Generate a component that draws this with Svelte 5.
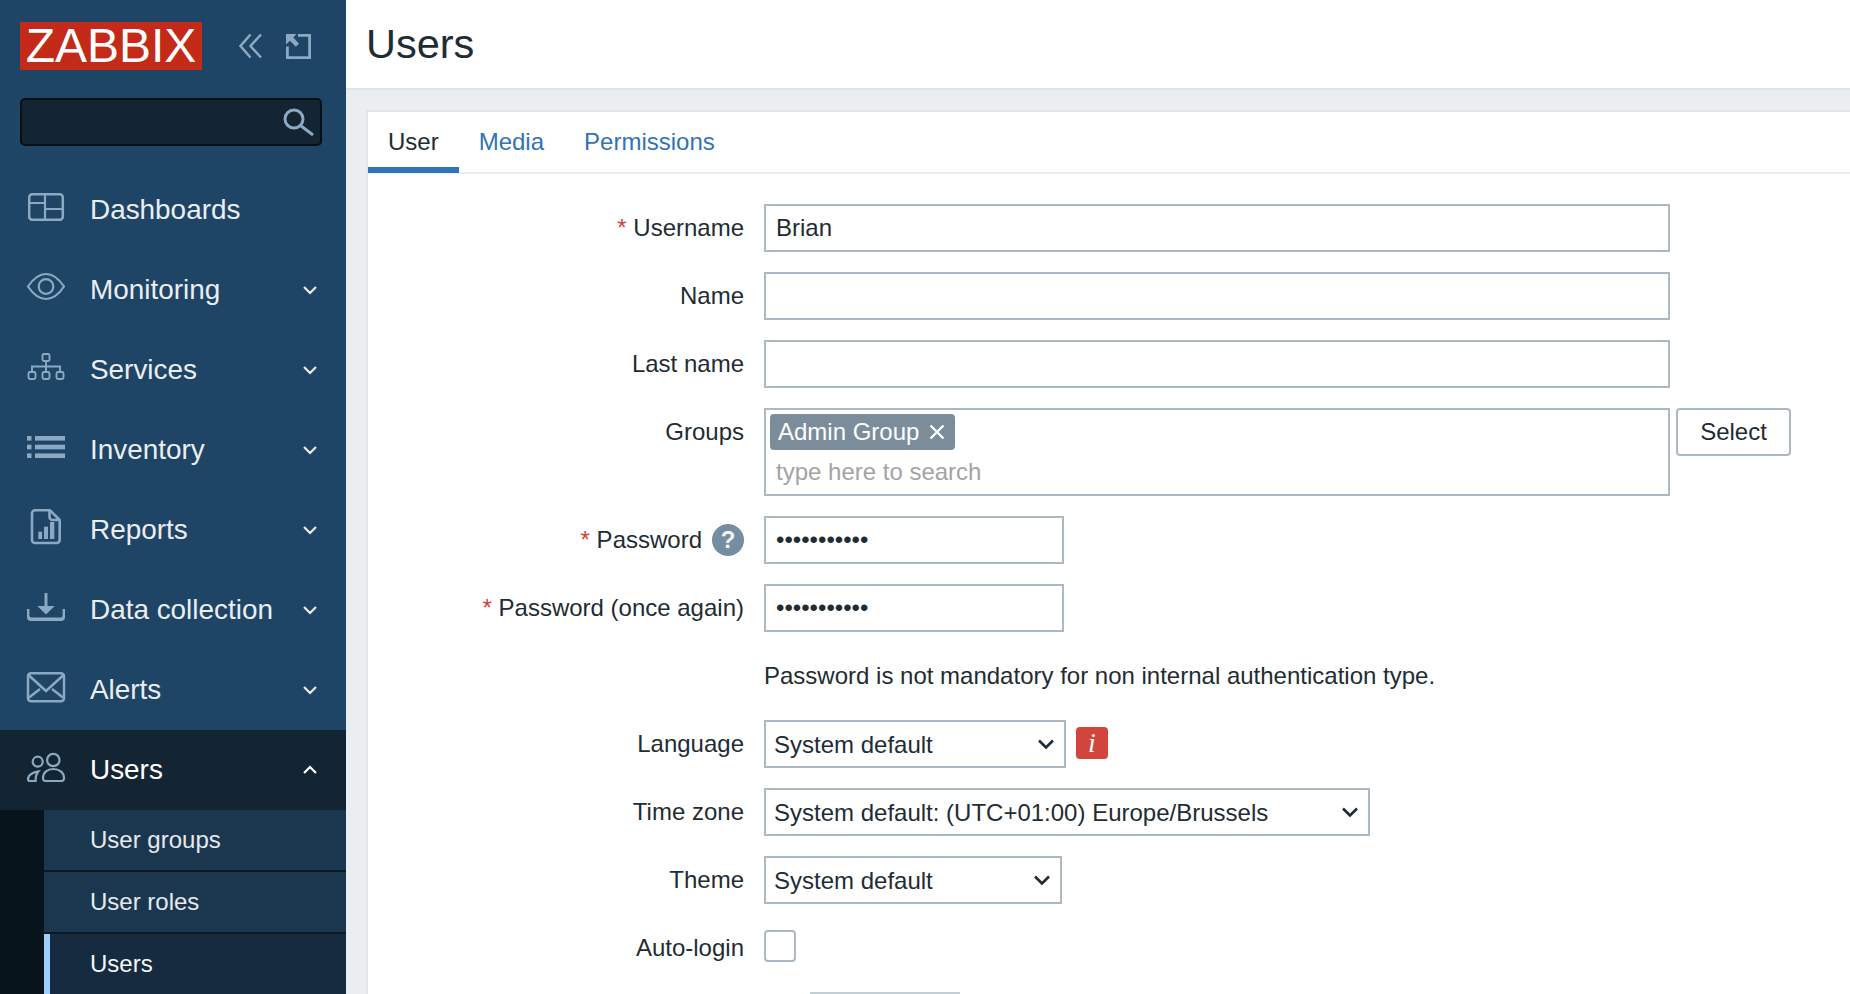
<script>
  const nav = [
    { id: 'dash', label: 'Dashboards', chev: false },
    { id: 'eye', label: 'Monitoring', chev: true },
    { id: 'svc', label: 'Services', chev: true },
    { id: 'inv', label: 'Inventory', chev: true },
    { id: 'rep', label: 'Reports', chev: true },
    { id: 'data', label: 'Data collection', chev: true },
    { id: 'mail', label: 'Alerts', chev: true },
    { id: 'users', label: 'Users', chev: true, open: true }
  ];
  const sub = [
    { label: 'User groups' },
    { label: 'User roles' },
    { label: 'Users', active: true }
  ];
</script>

{#snippet icon(id)}
  <svg class="nav-icon" width="40" height="40" viewBox="0 0 40 40" fill="none" stroke="currentColor" stroke-width="2.2">
    {#if id === 'dash'}
      <rect x="3.2" y="7.2" width="33.6" height="25.6" rx="3" stroke-width="2.5" />
      <path d="M19 7v26M3 16h16M19 22h18" />
    {:else if id === 'eye'}
      <path d="M2 19.5C8 10.5 14 7 20 7s12 3.500 18 12.500C32 28.500 26 32 20 32S8 28.500 2 19.500Z" />
      <circle cx="20" cy="19.500" r="7.300" />
    {:else if id === 'svc'}
      <g stroke-width="1.900">
        <rect x="16.500" y="7" width="7" height="7" rx="1.500" />
        <rect x="2.500" y="25" width="7" height="7" rx="1.500" />
        <rect x="16.500" y="25" width="7" height="7" rx="1.500" />
        <rect x="30.500" y="25" width="7" height="7" rx="1.500" />
        <path d="M20 14v11M6 24.500V19.500h28v5" />
      </g>
    {:else if id === 'inv'}
      <g fill="currentColor" stroke="none">
        <rect x="1" y="9" width="4.500" height="4.600" />
        <rect x="1" y="17.700" width="4.500" height="4.600" />
        <rect x="1" y="26.400" width="4.500" height="4.600" />
        <rect x="9" y="9" width="30" height="4.600" />
        <rect x="9" y="17.700" width="30" height="4.600" />
        <rect x="9" y="26.400" width="30" height="4.600" />
      </g>
    {:else if id === 'rep'}
      <path stroke-width="2.600" stroke-linejoin="round" d="M9 3.300H24L33.700 13V33a3 3 0 0 1-3 3H9a3 3 0 0 1-3-3V6.300a3 3 0 0 1 3-3Z" />
      <path stroke-width="2.600" d="M23.500 3.300V10a3 3 0 0 0 3 3h7" />
      <g fill="currentColor" stroke="none">
        <rect x="12.300" y="24.700" width="3.800" height="7.300" />
        <rect x="18" y="19.700" width="4" height="12.300" />
        <rect x="24" y="15" width="4.300" height="17" />
      </g>
    {:else if id === 'data'}
      <path stroke-width="3" d="M20 6v15" />
      <path fill="currentColor" stroke="none" d="M11.300 19H28.700L20 27.500Z" />
      <path fill="currentColor" stroke="none" d="M1 22h2.400v6.500a2 2 0 0 0 2 2h29.200a2 2 0 0 0 2-2V22H39v8a4 4 0 0 1-4 4H5a4 4 0 0 1-4-4Z" />
    {:else if id === 'mail'}
      <rect x="2" y="6.300" width="36" height="28" rx="3" stroke-width="2.500" />
      <path stroke-width="2.500" d="M3 8.500 20 24 37 8.500M3 30.500l11-8.500M37 30.500l-11-8.500" />
    {:else if id === 'users'}
      <circle cx="27.300" cy="13" r="6.200" />
      <circle cx="11.700" cy="14.700" r="5" />
      <path d="M17 31C17 25.500 21.500 22 27.300 22S38 25.500 38 31c0 2-1 3-2.500 3h-16C18 34 17 33 17 31Z" />
      <path d="M12.500 24.300C6.500 25 2 28.300 2 32c0 1.300.7 2 2 2h5.700C9.300 30.500 10.300 27 12.500 24.300Z" />
    {/if}
  </svg>
{/snippet}

<div class="page">
  <aside class="sidebar">
    <div class="brand">
      <div class="logo">ZABBIX</div>
      <button class="tool first" aria-label="Collapse sidebar">
        <svg width="24" height="26" viewBox="0 0 24 26" fill="none" stroke="currentColor" stroke-width="2.500">
          <path d="M11.500 1.500 1.500 13l10 11.500M22 1.500 11.500 13 22 24.500" />
        </svg>
      </button>
      <button class="tool" aria-label="Hide sidebar">
        <svg width="26" height="26" viewBox="0 0 26 26" fill="none" stroke="currentColor" stroke-width="2.800">
          <path d="M13 2.400H24.600V24.600H2.400V13.500" />
          <path fill="currentColor" stroke="none" d="M1 1H11.500L8.300 4.600 14 10.800 10.800 13.800 5 7.800 1 11.500Z" />
        </svg>
      </button>
    </div>

    <div class="search">
      <input class="search-input" type="text" aria-label="Search" />
      <svg class="search-icon" width="32" height="28" viewBox="0 0 32 28" fill="none" stroke="currentColor" stroke-width="3">
        <circle cx="11" cy="11" r="9" />
        <path d="M17.500 17.500 30 27" />
      </svg>
    </div>

    <nav class="nav">
      {#each nav as item}
        <div class="nav-item" class:open={item.open}>
          {@render icon(item.id)}
          <span class="nav-label">{item.label}</span>
          {#if item.chev}
            <svg class="chev" width="14" height="10" viewBox="0 0 14 10" fill="none" stroke="currentColor" stroke-width="2.200">
              {#if item.open}
                <path d="M1 8l6-6 6 6" />
              {:else}
                <path d="M1 2l6 6 6-6" />
              {/if}
            </svg>
          {/if}
        </div>
      {/each}
      <div class="submenu">
        {#each sub as s}
          <div class="sub-item" class:active={s.active}>{s.label}</div>
        {/each}
      </div>
    </nav>
  </aside>

  <main class="main">
    <header class="head"><h1>Users</h1></header>
    <section class="card">
      <div class="tabs">
        <div class="tab current">User</div>
        <div class="tab">Media</div>
        <div class="tab">Permissions</div>
      </div>

      <form class="form">
        <div class="lbl"><span class="req">*</span> Username</div>
        <div class="field"><input class="text" type="text" value="Brian" /></div>

        <div class="lbl">Name</div>
        <div class="field"><input class="text" type="text" /></div>

        <div class="lbl">Last name</div>
        <div class="field"><input class="text" type="text" /></div>

        <div class="lbl">Groups</div>
        <div class="field groups">
          <div class="multi">
            <div class="tag">Admin Group
              <svg width="16" height="16" viewBox="0 0 16 16" stroke="currentColor" stroke-width="2.400" fill="none">
                <path d="M1.500 1.500l13 13M14.500 1.500l-13 13" />
              </svg>
            </div>
            <div class="placeholder">type here to search</div>
          </div>
          <button type="button" class="select-btn">Select</button>
        </div>

        <div class="lbl with-hint"><span class="req">*</span>&nbsp;Password <span class="hint">?</span></div>
        <div class="field"><input class="text short" type="password" value="abcdefghijk" /></div>

        <div class="lbl"><span class="req">*</span> Password (once again)</div>
        <div class="field"><input class="text short" type="password" value="abcdefghijk" /></div>

        <div class="lbl"></div>
        <div class="note">Password is not mandatory for non internal authentication type.</div>

        <div class="lbl">Language</div>
        <div class="field">
          <div class="sel w-lang">
            <select><option>System default</option></select>
            <svg class="sel-arrow" width="16" height="10" viewBox="0 0 16 10" fill="none" stroke="currentColor" stroke-width="2.600"><path d="M1 1.500l7 7 7-7" /></svg>
          </div>
          <span class="info">i</span>
        </div>

        <div class="lbl">Time zone</div>
        <div class="field">
          <div class="sel w-tz">
            <select><option>System default: (UTC+01:00) Europe/Brussels</option></select>
            <svg class="sel-arrow" width="16" height="10" viewBox="0 0 16 10" fill="none" stroke="currentColor" stroke-width="2.600"><path d="M1 1.500l7 7 7-7" /></svg>
          </div>
        </div>

        <div class="lbl">Theme</div>
        <div class="field">
          <div class="sel w-theme">
            <select><option>System default</option></select>
            <svg class="sel-arrow" width="16" height="10" viewBox="0 0 16 10" fill="none" stroke="currentColor" stroke-width="2.600"><path d="M1 1.500l7 7 7-7" /></svg>
          </div>
        </div>

        <div class="lbl">Auto-login</div>
        <div class="field"><input class="check" type="checkbox" aria-label="Auto-login" /></div>

        <div class="lbl"></div>
        <div class="field"><div class="cut-field"></div></div>
      </form>
    </section>
  </main>
</div>

<style>
  :global(body) {
    margin: 0;
    overflow: hidden;
    background: #ebeef0;
  }
  .page {
    display: flex;
    width: 1850px;
    height: 994px;
    overflow: hidden;
    font-family: "Liberation Sans", Arial, sans-serif;
    color: #1f2c33;
    font-size: 24px;
  }
  .sidebar {
    flex: 0 0 346px;
    background: #1f4566;
    color: #ebeef1;
  }
  .brand {
    display: flex;
    align-items: center;
    height: 48px;
    padding: 22px 0 0 20px;
  }
  .logo {
    width: 182px;
    height: 48px;
    background: #c32a18;
    color: #fff;
    font-size: 48px;
    line-height: 48px;
    text-align: center;
    flex: none;
  }
  .tool {
    display: flex;
    padding: 0;
    border: 0;
    background: none;
    color: #8ba9c2;
    margin-left: 22px;
  }
  .tool.first {
    margin-left: 37px;
  }
  .search {
    position: relative;
    margin: 28px 24px 0 20px;
    height: 48px;
  }
  .search-input {
    display: block;
    box-sizing: border-box;
    width: 100%;
    height: 48px;
    background: #132433;
    border: 2px solid #060f16;
    border-radius: 5px;
  }
  .search-icon {
    position: absolute;
    right: 7px;
    top: 10px;
    color: #8ba9c2;
  }
  .nav {
    margin-top: 24px;
  }
  .nav-item {
    display: flex;
    align-items: center;
    height: 80px;
    padding: 0 29px 0 26px;
    font-size: 27.900px;
  }
  .nav-item.open {
    background: #132533;
    color: #fff;
  }
  .nav-icon {
    flex: none;
    margin-top: -6px;
    color: #8ba9c2;
  }
  .nav-label {
    margin-left: 24px;
  }
  .chev {
    margin-left: auto;
  }
  .submenu {
    padding-left: 44px;
    background: #07141c;
  }
  .sub-item {
    box-sizing: content-box;
    height: 60px;
    line-height: 60px;
    padding-left: 46px;
    background: #1b3750;
    border-bottom: 2px solid #0a1822;
    color: #e6eaee;
  }
  .sub-item.active {
    background: #162a40;
    border-left: 6px solid #9ccffd;
    padding-left: 40px;
    color: #f5f7f8;
  }
  .main {
    flex: 1;
    min-width: 0;
  }
  .head {
    height: 88px;
    background: #fff;
    border-bottom: 2px solid #dfe4e8;
    display: flex;
    align-items: center;
    padding-left: 20px;
  }
  h1 {
    margin: 0;
    font-size: 41.500px;
    font-weight: normal;
    color: #1f2c33;
  }
  .card {
    margin: 20px 0 0 20px;
    background: #fff;
    border-top: 2px solid #e0e5e8;
    border-left: 2px solid #e0e5e8;
    height: 900px;
  }
  .tabs {
    display: flex;
    height: 60px;
    border-bottom: 2px solid #ebeef0;
  }
  .tab {
    padding: 0 20px 5px;
    line-height: 59px;
    color: #3173b5;
  }
  .tab.current {
    color: #1f2c33;
    padding: 0 20px;
    height: 55px;
    border-bottom: 6px solid #3173b5;
  }
  .form {
    display: grid;
    grid-template-columns: 376px 1fr;
    column-gap: 20px;
    row-gap: 20px;
    padding-top: 30px;
  }
  .lbl {
    text-align: right;
    line-height: 48px;
    min-height: 48px;
  }
  .with-hint {
    display: flex;
    justify-content: flex-end;
    align-items: center;
  }
  .req {
    color: #d13f38;
  }
  .field {
    display: flex;
    align-items: flex-start;
    min-height: 48px;
    min-width: 0;
  }
  input.text {
    box-sizing: border-box;
    width: 906px;
    height: 48px;
    padding: 0 10px;
    border: 2px solid #acb9c2;
    border-radius: 0;
    background: #fff;
    font: inherit;
    color: #1f2c33;
    outline: none;
  }
  input.short {
    width: 300px;
  }
  .groups {
    gap: 6px;
  }
  .multi {
    box-sizing: border-box;
    width: 906px;
    height: 88px;
    border: 2px solid #acb9c2;
    padding: 4px;
  }
  .tag {
    display: inline-flex;
    align-items: center;
    gap: 10px;
    height: 36px;
    padding: 0 10px 0 8px;
    background: #7b8d9b;
    color: #fff;
    border-radius: 4px;
  }
  .placeholder {
    margin: 4px 0 0 6px;
    line-height: 36px;
    color: #a3a3a3;
  }
  .select-btn {
    box-sizing: border-box;
    width: 115px;
    height: 48px;
    border: 2px solid #acb9c2;
    border-radius: 4px;
    background: #fff;
    font: inherit;
    color: #1f2c33;
    padding: 0;
  }
  .hint {
    display: block;
    width: 32px;
    height: 32px;
    margin-left: 10px;
    border-radius: 50%;
    background: #768d9f;
    color: #f2f4f6;
    font-weight: bold;
    line-height: 32px;
    text-align: center;
  }
  .note {
    line-height: 48px;
  }
  .sel {
    position: relative;
    height: 48px;
  }
  .sel select {
    appearance: none;
    box-sizing: border-box;
    width: 100%;
    height: 48px;
    padding: 0 8px;
    border: 2px solid #acb9c2;
    border-radius: 0;
    background: #fff;
    font: inherit;
    color: #1f2c33;
    outline: none;
  }
  .sel-arrow {
    position: absolute;
    right: 12px;
    top: 19px;
    pointer-events: none;
    color: #1f2c33;
  }
  .w-lang {
    width: 302px;
  }
  .w-tz {
    width: 606px;
  }
  .w-theme {
    width: 298px;
  }
  .info {
    display: block;
    width: 32px;
    height: 32px;
    margin: 7px 0 0 10px;
    border-radius: 4px;
    background: #d1453d;
    color: #fff;
    font-family: "Liberation Serif", serif;
    font-style: italic;
    font-size: 28px;
    line-height: 32px;
    text-align: center;
  }
  .check {
    appearance: none;
    box-sizing: border-box;
    width: 32px;
    height: 32px;
    margin: 6px 0 0;
    border: 2px solid #acb9c2;
    border-radius: 4px;
    background: #fff;
  }
  .cut-field {
    width: 150px;
    height: 48px;
    margin-left: 46px;
    border-top: 2px solid #c4ced5;
  }
</style>
